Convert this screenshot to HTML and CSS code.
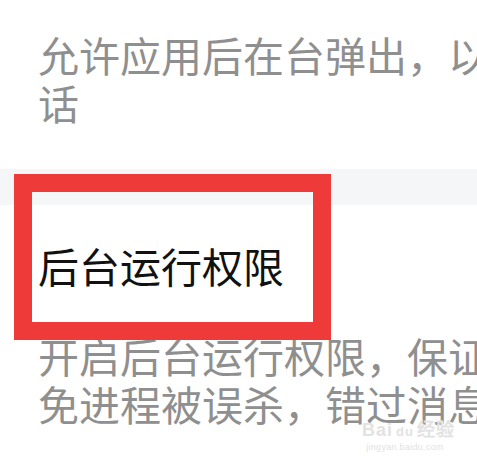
FILE: index.html
```html
<!DOCTYPE html>
<html lang="zh-CN">
<head>
    <meta charset="UTF-8">
    <meta name="viewport" content="width=device-width, initial-scale=1.0">
    <title>后台运行权限</title>
    <link rel="stylesheet" href="styles.css">
</head>
<body>
    <section class="item">
        <p class="desc">
            <span class="line">允许应用后在台弹出，以免</span>
            <span class="line">话</span>
        </p>
    </section>

    <div class="divider"></div>

    <section class="item item-second">
        <h2 class="title">后台运行权限</h2>
        <p class="desc">
            <span class="line">开启后台运行权限，保证应</span>
            <span class="line">免进程被误杀，错过消息提</span>
        </p>
    </section>

    <!-- Annotation box drawn over the title -->
    <div class="highlight"></div>

    <!-- Watermark -->
    <div class="watermark">
        <div class="wm-logo">Bai<span class="wm-du">du</span>经验</div>
        <div class="wm-url">jingyan.baidu.com</div>
    </div>
</body>
</html>
```

FILE: styles.css
```css
/* Reset default margins and paddings */
* {
    margin: 0;
    padding: 0;
    box-sizing: border-box;
}

body {
    position: relative;
    width: 477px;
    height: 461px;
    overflow: hidden;
    font-family: "Noto Sans CJK SC", "Noto Sans", sans-serif;
    background: #fff;
    color: #111;
}

.item {
    padding: 30px 0 0 38px;
}

.desc {
    font-size: 41px;
    line-height: 48px;
    color: #8f8f8f;
}

.line {
    display: block;
    white-space: nowrap;
}

.divider {
    height: 36px;
    margin-top: 43px;
    background: #f5f6f8;
}

.item-second {
    padding-top: 36px;
}

.title {
    font-size: 41px;
    line-height: 48px;
    font-weight: 400;
    color: #111;
    margin-bottom: 42px;
}

/* Red annotation frame */
.highlight {
    position: absolute;
    left: 14px;
    top: 174px;
    width: 317px;
    height: 166px;
    border: 18px solid #ef3a3a;
}

.watermark {
    position: absolute;
    left: 362px;
    top: 421px;
    width: 86px;
    text-align: center;
    color: #e2e2e2;
    font-family: "Liberation Sans", sans-serif;
    text-shadow: 0 0 1px #fff;
}

.wm-logo {
    font-size: 18px;
    font-weight: 700;
    line-height: 18px;
    letter-spacing: 1px;
    white-space: nowrap;
}

.wm-du {
    font-size: 13px;
    margin: 0 3px;
}

.wm-url {
    font-size: 9px;
    line-height: 12px;
    letter-spacing: 0.3px;
    white-space: nowrap;
}
```
